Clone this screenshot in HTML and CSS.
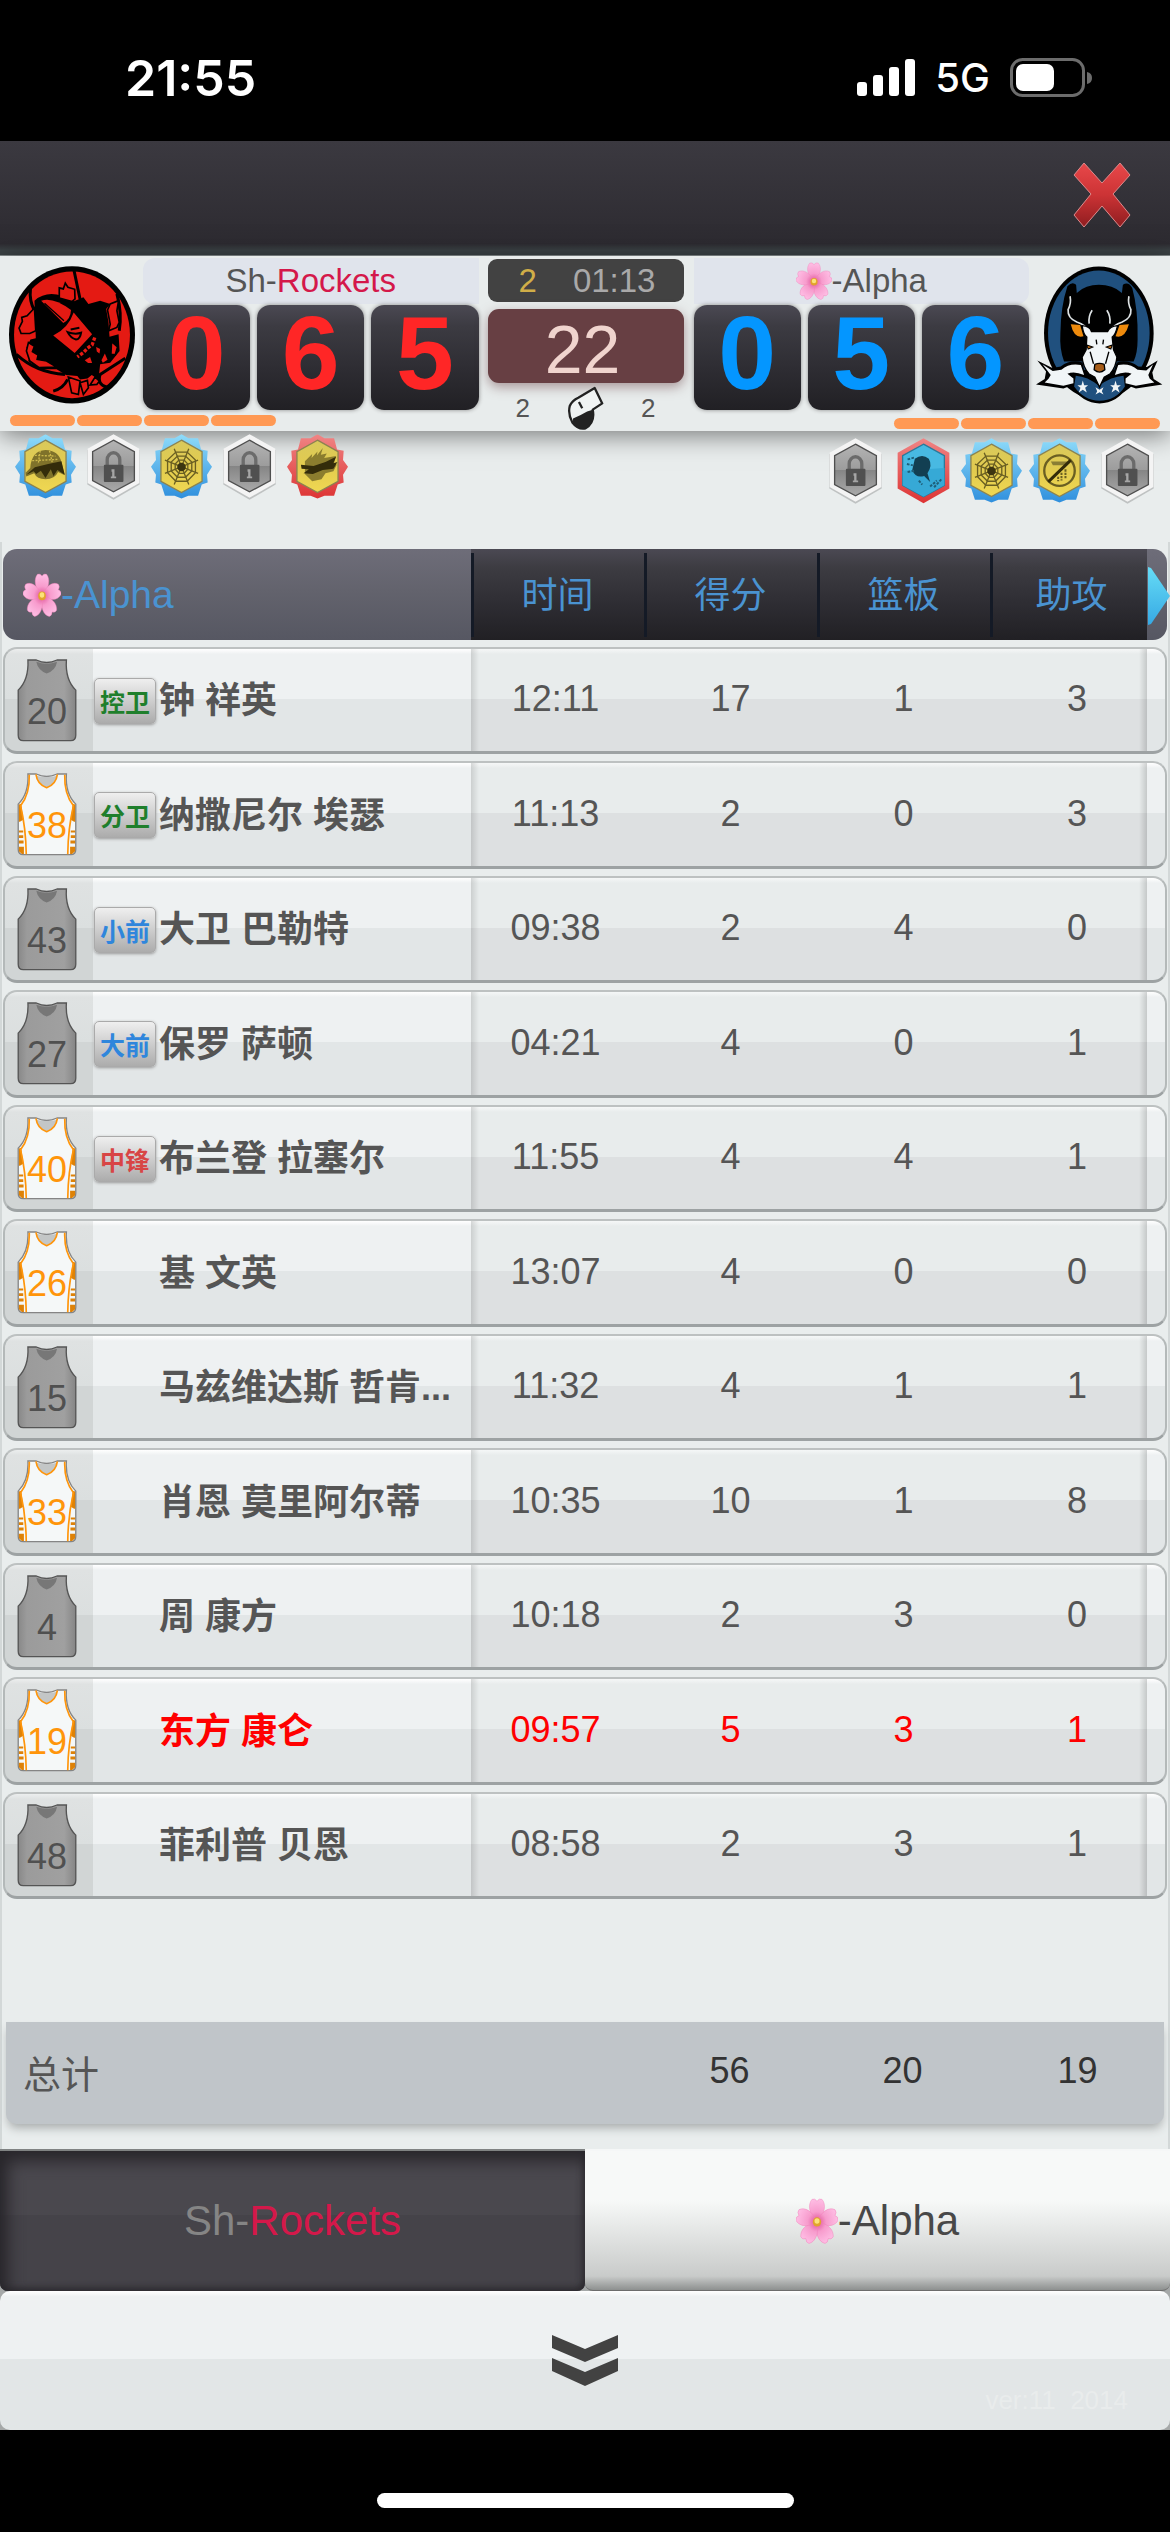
FILE: index.html
```html
<!DOCTYPE html>
<html lang="zh-CN">
<head>
  <meta charset="UTF-8">
  <meta name="viewport" content="width=device-width, initial-scale=1">
  <title>Sh-Rockets vs Alpha</title>
  <link rel="stylesheet" href="styles.css">
</head>
<body>

  <!-- shared icons -->
  <svg class="sprite" aria-hidden="true">
    <defs>
      <linearGradient id="gBlue" x1="0" y1="0" x2="0" y2="1">
        <stop offset="0" stop-color="#8fdcfa"/><stop offset="1" stop-color="#2f8fdd"/>
      </linearGradient>
      <linearGradient id="gRed" x1="0" y1="0" x2="0" y2="1">
        <stop offset="0" stop-color="#f08585"/><stop offset="1" stop-color="#dd3434"/>
      </linearGradient>
      <linearGradient id="gYellow" x1="0" y1="0" x2="0" y2="1">
        <stop offset="0" stop-color="#d9c95c"/><stop offset="0.5" stop-color="#e2cb4e"/><stop offset="1" stop-color="#f0d852"/>
      </linearGradient>
      <linearGradient id="gLock" x1="0" y1="0" x2="0" y2="1">
        <stop offset="0" stop-color="#b4b4b4"/><stop offset="0.5" stop-color="#9c9c9c"/><stop offset="0.5" stop-color="#858585"/><stop offset="1" stop-color="#aaaaaa"/>
      </linearGradient>
      <linearGradient id="gJersey" x1="0" y1="0" x2="1" y2="0">
        <stop offset="0" stop-color="#888"/><stop offset="0.15" stop-color="#9b9b9b"/><stop offset="0.8" stop-color="#a0a0a0"/><stop offset="1" stop-color="#858585"/>
      </linearGradient>
      <linearGradient id="gClose" x1="0" y1="0" x2="0" y2="1">
        <stop offset="0" stop-color="#e8484a"/><stop offset="0.5" stop-color="#cc3335"/><stop offset="1" stop-color="#8f1d20"/>
      </linearGradient>
      <linearGradient id="gArrow" x1="0" y1="0" x2="0" y2="1">
        <stop offset="0" stop-color="#66dcf6"/><stop offset="1" stop-color="#36a9e4"/>
      </linearGradient>
      <radialGradient id="gPetal" gradientUnits="userSpaceOnUse" cx="50" cy="50" r="50">
        <stop offset="0" stop-color="#e0559a"/><stop offset="0.4" stop-color="#f79ccd"/><stop offset="1" stop-color="#ffc0e6"/>
      </radialGradient>
    </defs>

    <symbol id="flower" viewBox="0 0 100 100" preserveAspectRatio="none">
      <g fill="url(#gPetal)" stroke="#f07fb8" stroke-width="1">
        <path id="petal" d="M50 52C30 34 28 14 38 3Q45 0 50 7Q55 0 62 3C72 14 70 34 50 52Z"/>
        <use href="#petal" transform="rotate(72 50 52)"/>
        <use href="#petal" transform="rotate(144 50 52)"/>
        <use href="#petal" transform="rotate(216 50 52)"/>
        <use href="#petal" transform="rotate(288 50 52)"/>
      </g>
      <circle cx="50" cy="52" r="10" fill="#e2a32c"/>
      <circle cx="50" cy="50" r="6" fill="#fbe27a"/>
    </symbol>

    <symbol id="star" viewBox="0 0 184 198">
      <path d="M92 0L113 12H142L151 46L171 50L169 78L184 98L169 122L171 146L153 152L142 186H113L92 194L71 186H42L31 152L13 146L15 122L0 98L15 78L13 50L33 46L42 12H71Z"/>
      <path d="M92 18L154 53V142L92 176L30 142V53Z" fill="url(#gYellow)" stroke="#8c8350" stroke-width="4"/>
    </symbol>
    <symbol id="lock" viewBox="0 0 184 198">
      <path d="M92 4L171 48V152L92 198L13 152V48Z" fill="#bfc2c2"/>
      <path d="M92 0L170 44V147L92 192L14 147V44Z" fill="#f4f4f4"/>
      <path d="M92 18L155 53V140L92 174L29 140V53Z" fill="url(#gLock)" stroke="#4f4f4f" stroke-width="4"/>
      <path d="M73 96V77a19 21 0 0 1 38 0V96" fill="none" stroke="#6b6b6b" stroke-width="10"/>
      <rect x="63" y="92" width="59" height="52" rx="3" fill="#505050"/>
      <path d="M86 106h9v22h5v5H84v-5h4v-15h-2z" fill="#a5a5a5"/>
    </symbol>
    <symbol id="web" viewBox="0 0 184 198">
      <g fill="none" stroke="#6a5f22" stroke-width="4">
        <path d="M75 54H109L134 78V116L109 142H75L50 116V78Z"/>
        <path d="M80 66H104L123 84V111L104 130H80L61 111V84Z"/>
        <path d="M84 78H100L111 90V106L100 118H84L73 106V90Z"/>
        <path d="M70 44L114 152M114 44L70 152M42 78L142 118M42 118L142 78"/>
      </g>
      <circle cx="92" cy="99" r="13" fill="#3c3510"/>
    </symbol>

    <symbol id="jersey-gray" viewBox="0 0 178 248">
      <path d="M32 3H57Q88 18 119 3H147Q143 62 175 93V228Q175 244 160 244H18Q3 244 3 228V93Q35 62 32 3Z" fill="url(#gJersey)" stroke="#555" stroke-width="4"/>
      <path d="M57 8Q88 20 119 8Q115 34 88 43Q62 34 57 8Z" fill="#777"/>
    </symbol>
    <symbol id="jersey-white" viewBox="0 0 178 248">
      <path d="M32 3H57Q88 18 119 3H147Q143 62 175 93V228Q175 244 160 244H18Q3 244 3 228V93Q35 62 32 3Z" fill="#f5f8f8" stroke="#858585" stroke-width="4"/>
      <path d="M57 8Q88 16 119 8Q115 34 88 43Q62 34 57 8Z" fill="#c3c6c6"/>
      <g fill="#de8207">
        <path d="M5 94L12 92L18 140L8 146H5ZM5 172H18V178H5ZM5 186H18V194H5ZM5 202H19V211H5ZM5 220H20V242H14L5 234Z"/>
        <path d="M173 94L166 92L160 140L170 146H173ZM173 172H160V178H173ZM173 186H160V194H173ZM173 202H159V211H173ZM173 220H158V242H164L173 234Z"/>
      </g>
      <g fill="none" stroke="#ff950a" stroke-width="5">
        <path d="M56 4Q60 34 88 44Q116 34 120 4"/>
        <path d="M36 5Q38 62 10 98Q26 165 27 243M142 5Q140 62 168 98Q152 165 151 243"/>
      </g>
    </symbol>
  </svg>

  <header class="status-bar">
    <span class="clock">21:55</span>
    <div class="status-icons">
      <svg width="58" height="38" viewBox="0 0 58 38" fill="#fff" aria-hidden="true">
        <rect x="0" y="23" width="10" height="14" rx="3"/>
        <rect x="16" y="16" width="10" height="21" rx="3"/>
        <rect x="32" y="8" width="10" height="29" rx="3"/>
        <rect x="48" y="0" width="10" height="37" rx="3"/>
      </svg>
      <span class="network">5G</span>
      <svg width="82" height="39" viewBox="0 0 82 39" aria-hidden="true">
        <rect x="1.5" y="1.5" width="72" height="36" rx="11" fill="none" stroke="#6c6c6c" stroke-width="3"/>
        <rect x="6" y="6" width="38" height="27" rx="7" fill="#fff"/>
        <path d="M77 14q5 1 5 6t-5 6z" fill="#6c6c6c"/>
      </svg>
    </div>
  </header>

  <div class="top-bar">
    <button class="close" type="button" aria-label="关闭">
      <svg width="58" height="66" viewBox="0 0 58 66" aria-hidden="true">
        <path d="M11 1L29 21L47 1L57 13L40 32L57 53L47 65L29 44L11 65L1 53L18 32L1 13Z" fill="url(#gClose)" stroke="#dd8a8c" stroke-width="1"/>
      </svg>
    </button>
  </div>

  <section class="scoreboard">
    <div class="logo">
      <svg width="126" height="138" viewBox="28 47 376 411" role="img" aria-label="Sh-Rockets">
        <ellipse cx="216" cy="252" rx="188" ry="205" fill="#000"/>
        <ellipse cx="216" cy="252" rx="173" ry="189" fill="#e41a13"/>
        <g fill="none" stroke="#000" stroke-width="9">
          <path d="M222 60L240 145M92 115Q88 150 104 180M350 130Q366 190 357 240M50 310Q110 365 195 370M375 322L300 370Q290 400 320 408M160 420Q190 412 203 385"/>
        </g>
        <path d="M104 150Q150 110 222 152L250 140L265 160L300 150L330 160L318 175L325 215L328 258L355 250L358 300L330 335L300 340L295 385L275 372L262 382L240 385L232 375L198 372L170 355L120 355L85 330L96 312L80 290L92 266L108 262Z" fill="#000"/>
        <path d="M178 142V112L190 115L196 98L204 110L224 116L225 145L216 153Z" fill="#e41a13" stroke="#000" stroke-width="5"/>
        <path d="M104 172L82 195L66 200L68 212L58 232L64 248H90L108 240ZM86 275L104 286L98 302L115 312L112 325L140 330L170 348L118 350L90 330L80 300Z" fill="#e41a13" stroke="#000" stroke-width="5"/>
        <path d="M330 160L322 178L330 220L325 240L350 230L357 215L350 180L355 150ZM334 272L352 288L345 312L332 310Z" fill="#e41a13" stroke="#000" stroke-width="5"/>
        <path d="M205 378L240 390L235 430L215 425ZM240 395L262 388L265 410L250 430ZM285 378L298 390L290 400L270 402Z" fill="#e41a13" stroke="#000" stroke-width="5"/>
        <path d="M124 150Q160 138 213 178Q212 205 190 217Z" fill="#e41a13"/>
        <path d="M134 158L192 210" stroke="#000" stroke-width="4"/>
        <path d="M221 185L276 250L224 306L160 254Q205 232 221 185Z" fill="#e41a13"/>
        <path d="M203 244Q225 252 243 246Q240 265 228 266Q212 262 203 244ZM212 236L238 231" fill="none" stroke="#000" stroke-width="6"/>
        <path d="M284 260L276 282L262 292L250 305L232 318" fill="none" stroke="#e41a13" stroke-width="10" stroke-dasharray="10 5"/>
        <path d="M254 328L270 318L276 336L264 336ZM288 288L300 294L298 308L290 302ZM304 328L314 308L322 326L308 335Z" fill="#e41a13"/>
      </svg>
    </div>

    <div class="team team-home">
      <h2 class="team-name">Sh-<em>Rockets</em></h2>
      <div class="digits">
        <span>0</span><span>6</span><span>5</span>
      </div>
    </div>

    <div class="center">
      <div class="period"><span class="quarter">2</span><span>01:13</span></div>
      <div class="shot-clock">22</div>
      <div class="fouls">
        <span>2</span>
        <svg width="37" height="44" viewBox="284 434 112 134" aria-hidden="true">
          <path d="M368 440L391 487L362 506Q370 545 340 563Q318 568 300 545Q286 520 292 495Q300 478 318 470Z" fill="#f0f3f3" stroke="#222" stroke-width="7" stroke-linejoin="round"/>
          <path d="M302 533Q325 524 345 512L362 506Q370 545 340 563Q318 568 302 545Z" fill="#222"/>
          <path d="M320 483L330 502" stroke="#222" stroke-width="7"/>
        </svg>
        <span>2</span>
      </div>
    </div>

    <div class="team team-away">
      <h2 class="team-name"><svg class="flower" role="img" aria-label="🌸"><use href="#flower"/></svg>-Alpha</h2>
      <div class="digits">
        <span>0</span><span>5</span><span>6</span>
      </div>
    </div>

    <div class="logo">
      <svg width="127" height="138" viewBox="46 40 380 412" role="img" aria-label="Alpha">
        <ellipse cx="234" cy="240" rx="164" ry="199" fill="#000"/>
        <ellipse cx="234" cy="240" rx="152" ry="187" fill="#20507e"/>
        <path d="M234 96Q275 96 303 120L306 96Q322 85 334 105Q352 170 350 260Q350 300 338 325H130Q116 290 119 240Q120 160 140 100Q155 85 166 96L168 120Q195 96 234 96Z" fill="#000"/>
        <path d="M50 322L95 345L120 340Q150 318 185 328L190 350H280L288 328Q320 318 352 340L378 342L410 322L394 358L398 378L424 394L345 406L322 398Q290 450 236 451Q185 450 150 398L128 406L46 394L72 378L76 355Z" fill="#000"/>
        <path d="M66 334L96 354L122 350Q145 330 180 336L190 366Q160 352 140 362L158 376V390L128 398L72 388L84 376L90 366Z" fill="#f1f5f7"/>
        <path d="M396 334L376 352L350 350Q327 330 292 336L282 366Q312 352 332 362L314 376V390L345 398L400 388L386 376L382 366Z" fill="#f1f5f7"/>
        <path d="M165 368Q200 370 234 398Q272 370 308 368L312 400Q285 442 236 443Q190 442 160 400Z" fill="#20507e"/>
        <g fill="none" stroke="#dfe4e6" stroke-width="5">
          <path d="M148 130Q152 152 142 170Q140 195 168 207Q195 215 210 240M205 212Q202 190 214 172"/>
          <path d="M324 130Q320 152 330 170Q332 195 304 207Q277 215 262 240M267 212Q270 190 258 172"/>
        </g>
        <path d="M150 214L178 216L188 250Q160 258 150 214ZM324 214L296 216L284 250Q312 258 324 214Z" fill="#ee8a0c"/>
        <path d="M184 218Q208 220 212 236H260Q266 220 290 218Q284 246 274 252L278 290L288 312Q286 340 268 362L250 372L236 402L222 372L204 362Q186 340 184 312L196 290L198 252Q188 246 184 218Z" fill="#f1f5f7" stroke="#000" stroke-width="4"/>
        <path d="M198 276L216 282L202 288ZM274 276L256 282L270 288Z" fill="#c96c10" stroke="#000" stroke-width="3"/>
        <path d="M222 334Q236 328 250 334L252 350Q236 364 220 350Z" fill="#a65c18" stroke="#000" stroke-width="4"/>
        <path d="M226 260L228 274M248 260L246 274M208 296L218 332M264 296L254 332" fill="none" stroke="#000" stroke-width="4"/>
        <path id="s1" d="M186 382L190 396L202 396L193 404L198 418L186 410L174 418L179 404L170 396L182 396Z" fill="#f1f5f7"/>
        <use href="#s1" x="98"/>
        <path d="M224 402L236 410L248 402L243 414L248 424L236 417L224 424L229 414Z" fill="#f1f5f7"/>
      </svg>
    </div>

    <div class="energy energy-home"><i></i><i></i><i></i><i></i></div>
    <div class="energy energy-away"><i></i><i></i><i></i><i></i></div>
  </section>

  <div class="badges">
    <div class="badge-list">
      <svg class="badge" viewBox="0 0 184 198">
        <use href="#star" fill="url(#gBlue)"/>
        <path d="M46 102Q50 50 92 48Q132 50 140 84L150 124L130 114Q120 136 92 136Q66 136 58 118L34 128L32 116Z" fill="#7f722a"/>
        <path d="M60 100L100 90L140 82L150 122L128 108L116 126L108 106L92 132L78 110L64 120L56 112L34 122Z" fill="#332c0a"/>
        <path d="M60 64L122 66M52 80L128 76M76 50L70 90M104 50L112 84" stroke="#cdb94c" stroke-width="4" stroke-dasharray="6 4"/>
      </svg>
      <svg class="badge"><use href="#lock"/></svg>
      <svg class="badge"><use href="#star" fill="url(#gBlue)"/><use href="#web"/></svg>
      <svg class="badge"><use href="#lock"/></svg>
      <svg class="badge" viewBox="0 0 184 198">
        <use href="#star" fill="url(#gRed)"/>
        <path d="M54 82L76 60L74 72L92 52L90 64L108 42L102 62L120 58L112 72L148 66L142 86L150 92L140 112L116 118L104 136L76 142L54 120Z" fill="#8b7d2e"/>
        <path d="M42 92L80 96L116 84L148 68L140 88L152 84L140 104L108 108L78 120L50 118L66 106L44 104Z" fill="#332c0a"/>
      </svg>
    </div>
    <div class="badge-list badge-list-away">
      <svg class="badge"><use href="#lock"/></svg>
      <svg class="badge" viewBox="0 0 184 198">
        <path d="M92 0L170 44V152L92 196L14 152V44Z" fill="url(#gRed)"/>
        <path d="M92 18L155 53V142L92 177L29 142V53Z" fill="#48b9e2" stroke="#2b7a9a" stroke-width="4"/>
        <path d="M29 98L155 90V142L92 177L29 142Z" fill="#36a9d6"/>
        <path d="M66 62Q88 46 108 62Q120 82 104 106L112 132L94 114Q68 122 58 96Z" fill="#123f52"/>
        <path d="M44 64L66 58M42 78L60 82M44 102L64 98M78 128L88 140M112 146L132 128M124 148L146 124" stroke="#1f5f79" stroke-width="6" stroke-dasharray="8 4"/>
      </svg>
      <svg class="badge"><use href="#star" fill="url(#gBlue)"/><use href="#web"/></svg>
      <svg class="badge" viewBox="0 0 184 198">
        <use href="#star" fill="url(#gBlue)"/>
        <circle cx="92" cy="98" r="46" fill="none" stroke="#6a5f22" stroke-width="7"/>
        <path d="M66 70H118L106 82H72Z" fill="#8a7d34"/>
        <path d="M126 66L58 132" stroke="#332c0a" stroke-width="9"/>
        <path d="M98 104V128M110 94V124M88 116V130" stroke="#6a5f22" stroke-width="6" stroke-dasharray="7 3"/>
      </svg>
      <svg class="badge"><use href="#lock"/></svg>
    </div>
  </div>

  <main class="roster">
    <table class="stats">
      <colgroup>
        <col class="col-number"><col><col class="col-stat"><col class="col-stat"><col class="col-stat"><col class="col-last">
      </colgroup>
      <thead>
        <tr>
          <th class="team-cell" colspan="2" scope="col"><svg class="flower" role="img" aria-label="🌸"><use href="#flower"/></svg>-Alpha</th>
          <th scope="col">时间</th>
          <th scope="col">得分</th>
          <th scope="col">篮板</th>
          <th scope="col">助攻
            <button class="next" type="button" aria-label="下一页">
              <svg width="22" height="58" viewBox="0 0 22 58" aria-hidden="true"><path d="M0 0L3 1L22 29L3 57L0 58Z" fill="url(#gArrow)"/></svg>
            </button>
          </th>
        </tr>
      </thead>
      <tbody>
        <tr>
          <td><div class="jersey bench"><svg><use href="#jersey-gray"/></svg><span>20</span></div></td>
          <td><div class="player"><span class="pos guard">控卫</span><span class="name">钟 祥英</span></div></td>
          <td>12:11</td><td>17</td><td>1</td><td>3</td>
        </tr>
        <tr>
          <td><div class="jersey"><svg><use href="#jersey-white"/></svg><span>38</span></div></td>
          <td><div class="player"><span class="pos guard">分卫</span><span class="name">纳撒尼尔 埃瑟</span></div></td>
          <td>11:13</td><td>2</td><td>0</td><td>3</td>
        </tr>
        <tr>
          <td><div class="jersey bench"><svg><use href="#jersey-gray"/></svg><span>43</span></div></td>
          <td><div class="player"><span class="pos forward">小前</span><span class="name">大卫 巴勒特</span></div></td>
          <td>09:38</td><td>2</td><td>4</td><td>0</td>
        </tr>
        <tr>
          <td><div class="jersey bench"><svg><use href="#jersey-gray"/></svg><span>27</span></div></td>
          <td><div class="player"><span class="pos forward">大前</span><span class="name">保罗 萨顿</span></div></td>
          <td>04:21</td><td>4</td><td>0</td><td>1</td>
        </tr>
        <tr>
          <td><div class="jersey"><svg><use href="#jersey-white"/></svg><span>40</span></div></td>
          <td><div class="player"><span class="pos big">中锋</span><span class="name">布兰登 拉塞尔</span></div></td>
          <td>11:55</td><td>4</td><td>4</td><td>1</td>
        </tr>
        <tr>
          <td><div class="jersey"><svg><use href="#jersey-white"/></svg><span>26</span></div></td>
          <td><div class="player"><span class="name">基 文英</span></div></td>
          <td>13:07</td><td>4</td><td>0</td><td>0</td>
        </tr>
        <tr>
          <td><div class="jersey bench"><svg><use href="#jersey-gray"/></svg><span>15</span></div></td>
          <td><div class="player"><span class="name">马兹维达斯 哲肯...</span></div></td>
          <td>11:32</td><td>4</td><td>1</td><td>1</td>
        </tr>
        <tr>
          <td><div class="jersey"><svg><use href="#jersey-white"/></svg><span>33</span></div></td>
          <td><div class="player"><span class="name">肖恩 莫里阿尔蒂</span></div></td>
          <td>10:35</td><td>10</td><td>1</td><td>8</td>
        </tr>
        <tr>
          <td><div class="jersey bench"><svg><use href="#jersey-gray"/></svg><span>4</span></div></td>
          <td><div class="player"><span class="name">周 康方</span></div></td>
          <td>10:18</td><td>2</td><td>3</td><td>0</td>
        </tr>
        <tr class="fouled-out">
          <td><div class="jersey"><svg><use href="#jersey-white"/></svg><span>19</span></div></td>
          <td><div class="player"><span class="name">东方 康仑</span></div></td>
          <td>09:57</td><td>5</td><td>3</td><td>1</td>
        </tr>
        <tr>
          <td><div class="jersey bench"><svg><use href="#jersey-gray"/></svg><span>48</span></div></td>
          <td><div class="player"><span class="name">菲利普 贝恩</span></div></td>
          <td>08:58</td><td>2</td><td>3</td><td>1</td>
        </tr>
      </tbody>
    </table>

    <table class="totals">
      <colgroup>
        <col><col class="col-stat"><col class="col-stat"><col class="col-last">
      </colgroup>
      <tr><th scope="row">总计</th><td>56</td><td>20</td><td>19</td></tr>
    </table>
  </main>

  <nav class="tabs">
    <button class="tab" type="button">Sh-<em>Rockets</em></button>
    <button class="tab active" type="button"><svg class="flower" role="img" aria-label="🌸"><use href="#flower"/></svg>-Alpha</button>
  </nav>

  <div class="drawer-wrap">
    <button class="drawer" type="button" aria-label="展开">
      <svg width="66" height="51" viewBox="0 0 66 51" fill="#424242" aria-hidden="true">
        <path d="M0 0L33 14L66 0V13L33 27L0 13Z"/>
        <path d="M0 23L33 37L66 23V36L33 51L0 36Z"/>
      </svg>
      <span class="version">ver:11 &nbsp;2014</span>
    </button>
  </div>

  <footer class="home-bar"><span></span></footer>

</body>
</html>
```

FILE: styles.css
```css
* {
  box-sizing: border-box;
}
body {
  margin: 0;
  min-height: 100vh;
  display: flex;
  flex-direction: column;
  background: #e9eded;
  color: #555;
  font-family: "Liberation Sans", "Noto Sans CJK SC", sans-serif;
  font-size: 36px;
}
button {
  border: 0;
  padding: 0;
  background: none;
  font: inherit;
  color: inherit;
  cursor: pointer;
}
svg {
  display: block;
}
em {
  font-style: normal;
  color: #d4184a;
}
.sprite {
  position: absolute;
  width: 0;
  height: 0;
}
.flower {
  display: inline-block;
  width: 38px;
  height: 44px;
  flex: none;
}

/* phone status bar */
.status-bar {
  display: flex;
  justify-content: space-between;
  align-items: center;
  height: 141px;
  padding: 14px 78px 0 125px;
  background: #000;
  color: #fff;
  font-family: Inter, sans-serif;
}
.clock {
  font-size: 50px;
  font-weight: 600;
}
.status-icons {
  display: flex;
  align-items: center;
  gap: 20px;
}
.network {
  font-size: 40px;
  font-weight: 500;
}

.top-bar {
  display: flex;
  justify-content: flex-end;
  align-items: center;
  height: 115px;
  padding: 0 39px 6px 0;
  background: linear-gradient(#3b3940, #2d2b31 90%, #3c4346 96%);
  border-bottom: 1px solid #8b9293;
}

/* scoreboard */
.scoreboard {
  display: grid;
  grid-template-columns: 143px 1fr 215px 1fr 141px;
  grid-template-rows: 157px 18px;
  background: #e8ecec;
  position: relative;
  box-shadow: 0 4px 24px rgba(0, 0, 0, 0.5);
}
.logo {
  display: flex;
  justify-content: center;
  align-items: center;
}
.team-name {
  display: flex;
  justify-content: center;
  align-items: center;
  height: 46px;
  margin: 2px 0 1px;
  background: #e0e4ec;
  font-size: 33px;
  font-weight: normal;
}
.team-home .team-name {
  border-radius: 12px 0 0 12px;
}
.team-away .team-name {
  border-radius: 0 12px 12px 0;
}
.team-name .flower {
  width: 36px;
  height: 38px;
}
.digits {
  display: flex;
  gap: 7px;
}
.digits span {
  flex: 1;
  height: 105px;
  border-radius: 13px;
  background: linear-gradient(#4b4953, #3c3b42 20%, #2e2d33 60%, #212024);
  box-shadow: 0 0 4px #888;
  color: #ff2626;
  font-size: 104px;
  font-weight: bold;
  line-height: 96px;
  text-align: center;
}
.team-away .digits span {
  color: #0496ff;
}
.center {
  grid-row: 1 / 3;
  grid-column: 3;
  padding: 3px 10px 0 9px;
}
.period {
  display: flex;
  justify-content: center;
  gap: 36px;
  height: 43px;
  padding-left: 3px;
  border-radius: 9px;
  background: #424242;
  color: #a9a9a9;
  font-size: 33px;
  line-height: 43px;
}
.quarter {
  color: #d0ae48;
}
.shot-clock {
  height: 74px;
  margin-top: 7px;
  padding-right: 6px;
  border-radius: 11px;
  background: #673f43;
  box-shadow: 0 4px 12px rgba(103, 63, 67, 0.5);
  color: #f0d4ce;
  font-size: 68px;
  line-height: 80px;
  text-align: center;
}
.fouls {
  display: flex;
  justify-content: space-between;
  align-items: center;
  padding: 3px 28px 0;
  font-size: 26px;
}
.energy {
  grid-row: 2;
  display: flex;
  gap: 2px;
  padding: 2px 10px;
}
.energy-home {
  grid-column: 1 / 3;
}
.energy-away {
  grid-column: 4 / 6;
  justify-content: flex-end;
  padding-top: 5px;
}
.energy i {
  width: 65px;
  height: 11px;
  border-radius: 6px;
  background: #ff9954;
}

.badges {
  display: flex;
  justify-content: space-between;
  height: 111px;
  padding: 3px 12px 0 15px;
  position: relative;
}
.badge-list {
  display: flex;
  gap: 7px;
}
.badge-list-away {
  padding-top: 4px;
}
.badge {
  width: 61px;
  height: 66px;
}

/* player table */
.roster {
  flex: 1;
  display: flex;
  flex-direction: column;
  justify-content: space-between;
  padding: 0 1px 25px;
  border: solid #d3d8d8;
  border-width: 0 2px;
}
table {
  width: 100%;
  table-layout: fixed;
  border-collapse: separate;
}
.stats {
  border-spacing: 0 7px;
}
.col-number {
  width: 90px;
}
.col-stat {
  width: 173px;
}
.col-last {
  width: 177px;
}
th,
td {
  padding: 0;
  font-weight: normal;
  text-align: center;
}
.stats th {
  position: relative;
  height: 91px;
  padding-bottom: 5px;
  background:
    linear-gradient(#141a26, #141a26) left / 3px 84px no-repeat,
    linear-gradient(#4b4953, #3d3c42 20%, #2e2d33 60%, #212024);
  color: #4a93d1;
}
.stats th.team-cell {
  padding: 0 0 0 20px;
  border-radius: 14px 0 0 14px;
  background: linear-gradient(#6e6d79, #63636d 45%, #565762);
  font-size: 39px;
  text-align: left;
}
.team-cell .flower {
  vertical-align: -9px;
}
.stats th:last-child {
  padding-right: 14px;
  border-radius: 0 14px 14px 0;
  background:
    linear-gradient(#6e6d79, #565762) right / 20px 100% no-repeat,
    linear-gradient(#141a26, #141a26) left / 3px 84px no-repeat,
    linear-gradient(#4b4953, #3d3c42 20%, #2e2d33 60%, #212024);
}
.next {
  position: absolute;
  top: 18px;
  right: -3px;
}
.stats td {
  height: 107px;
  padding-bottom: 2px;
  border-top: 2px solid #bdc1c1;
  border-bottom: 3px solid #9da2a3;
  background: linear-gradient(#f5f7f7, #e8ecec 5%, #e8ecec 49%, #dde0e1 49%);
}
.stats tr:nth-child(even) td {
  height: 108px;
}
.stats td:first-child {
  padding-bottom: 0;
  border-left: 2px solid #b4b9b9;
  border-radius: 14px 0 0 14px;
  background: linear-gradient(#eceeee, #dfe2e2 5%, #dbdfdf 49%, #d1d5d5 49%);
}
.stats td:nth-child(2) {
  background: linear-gradient(#fff, #eef1f2 5%, #eef1f2 49%, #e2e6e7 49%);
}
.stats td:nth-child(3) {
  padding-right: 4px;
  background:
    linear-gradient(90deg, rgba(0, 0, 0, 0.12), transparent) left / 8px 100% no-repeat,
    linear-gradient(#f5f7f7, #e8ecec 5%, #e8ecec 49%, #dde0e1 49%);
}
.stats td:last-child {
  padding-right: 1px;
  border-right: 2px solid #b4b9b9;
  border-radius: 0 14px 14px 0;
  background:
    linear-gradient(#fff, #eef1f2 5%, #eef1f2 49%, #e2e6e7 49%) right / 18px 100% no-repeat,
    linear-gradient(270deg, rgba(0, 0, 0, 0.15), transparent) right 18px top / 8px 100% no-repeat,
    linear-gradient(#f5f7f7, #e8ecec 5%, #e8ecec 49%, #dde0e1 49%);
}
.jersey {
  display: grid;
  width: 60px;
  margin-left: 12px;
  color: #ff950a;
}
.jersey svg,
.jersey span {
  grid-area: 1 / 1;
}
.jersey svg {
  width: 60px;
  height: 83px;
}
.jersey span {
  padding-top: 32px;
}
.jersey.bench {
  color: #505050;
}
.player {
  display: flex;
  align-items: center;
}
.pos {
  width: 62px;
  height: 46px;
  margin: 3px 0 0 1px;
  border: 1px solid #aaa;
  border-radius: 5px;
  background: linear-gradient(#efefef, #acacac);
  box-shadow: 0 1px 3px #999;
  font-size: 25px;
  font-weight: bold;
  line-height: 48px;
}
.guard {
  color: #1f7f2c;
}
.forward {
  color: #2f86dc;
}
.big {
  color: #d84545;
}
.name {
  margin-left: 3px;
  padding-bottom: 4px;
  font-weight: bold;
  white-space: nowrap;
}
.name:first-child {
  margin-left: 66px;
}
.fouled-out td {
  color: #f00;
}
.fouled-out .jersey {
  color: #ff950a;
}

.totals {
  border-spacing: 0;
  width: auto;
  height: 102px;
  margin: 0 3px;
  border-radius: 0 0 10px 10px;
  background: #c0c5c9;
  box-shadow: 0 6px 10px -2px #a9adad;
  color: #333;
}
.totals th {
  padding: 0 0 4px 17px;
  color: #555;
  font-size: 38px;
  text-align: left;
}
.totals td {
  padding: 0 0 4px 4px;
}

/* bottom tabs */
.tabs {
  display: flex;
  height: 142px;
  background: #a5a8a8;
}
.tab {
  flex: 1;
  display: flex;
  justify-content: center;
  align-items: center;
  border-top: 2px solid #808383;
  border-radius: 0 0 8px 8px;
  background: linear-gradient(#4a484e 46%, #454349 46%);
  box-shadow: inset 8px 10px 16px #28262b, inset -2px -3px 6px #2c2a2f;
  color: #858585;
  font-size: 42px;
}
.tab.active {
  border-top-color: #f5f7f7;
  background: linear-gradient(#f7f9f8 35%, #c9cbca 90%, #8d908f);
  border-bottom: 1px solid #6c6c6c;
  box-shadow: none;
  color: #484848;
}
.tab .flower {
  width: 42px;
  height: 46px;
}
.drawer-wrap {
  background: #a5a8a8;
}
.drawer {
  display: flex;
  justify-content: center;
  align-items: center;
  position: relative;
  width: 100%;
  height: 139px;
  border-radius: 10px;
  background: linear-gradient(#fff, #eef1f2 4%, #eef1f2 49%, #e2e6e7 49%);
}
.version {
  position: absolute;
  right: 42px;
  bottom: 14px;
  color: #e9ecec;
  font-size: 26px;
}
.home-bar {
  display: flex;
  justify-content: center;
  height: 102px;
  padding-top: 63px;
  background: #000;
}
.home-bar span {
  width: 417px;
  height: 15px;
  border-radius: 8px;
  background: #fff;
}
```
